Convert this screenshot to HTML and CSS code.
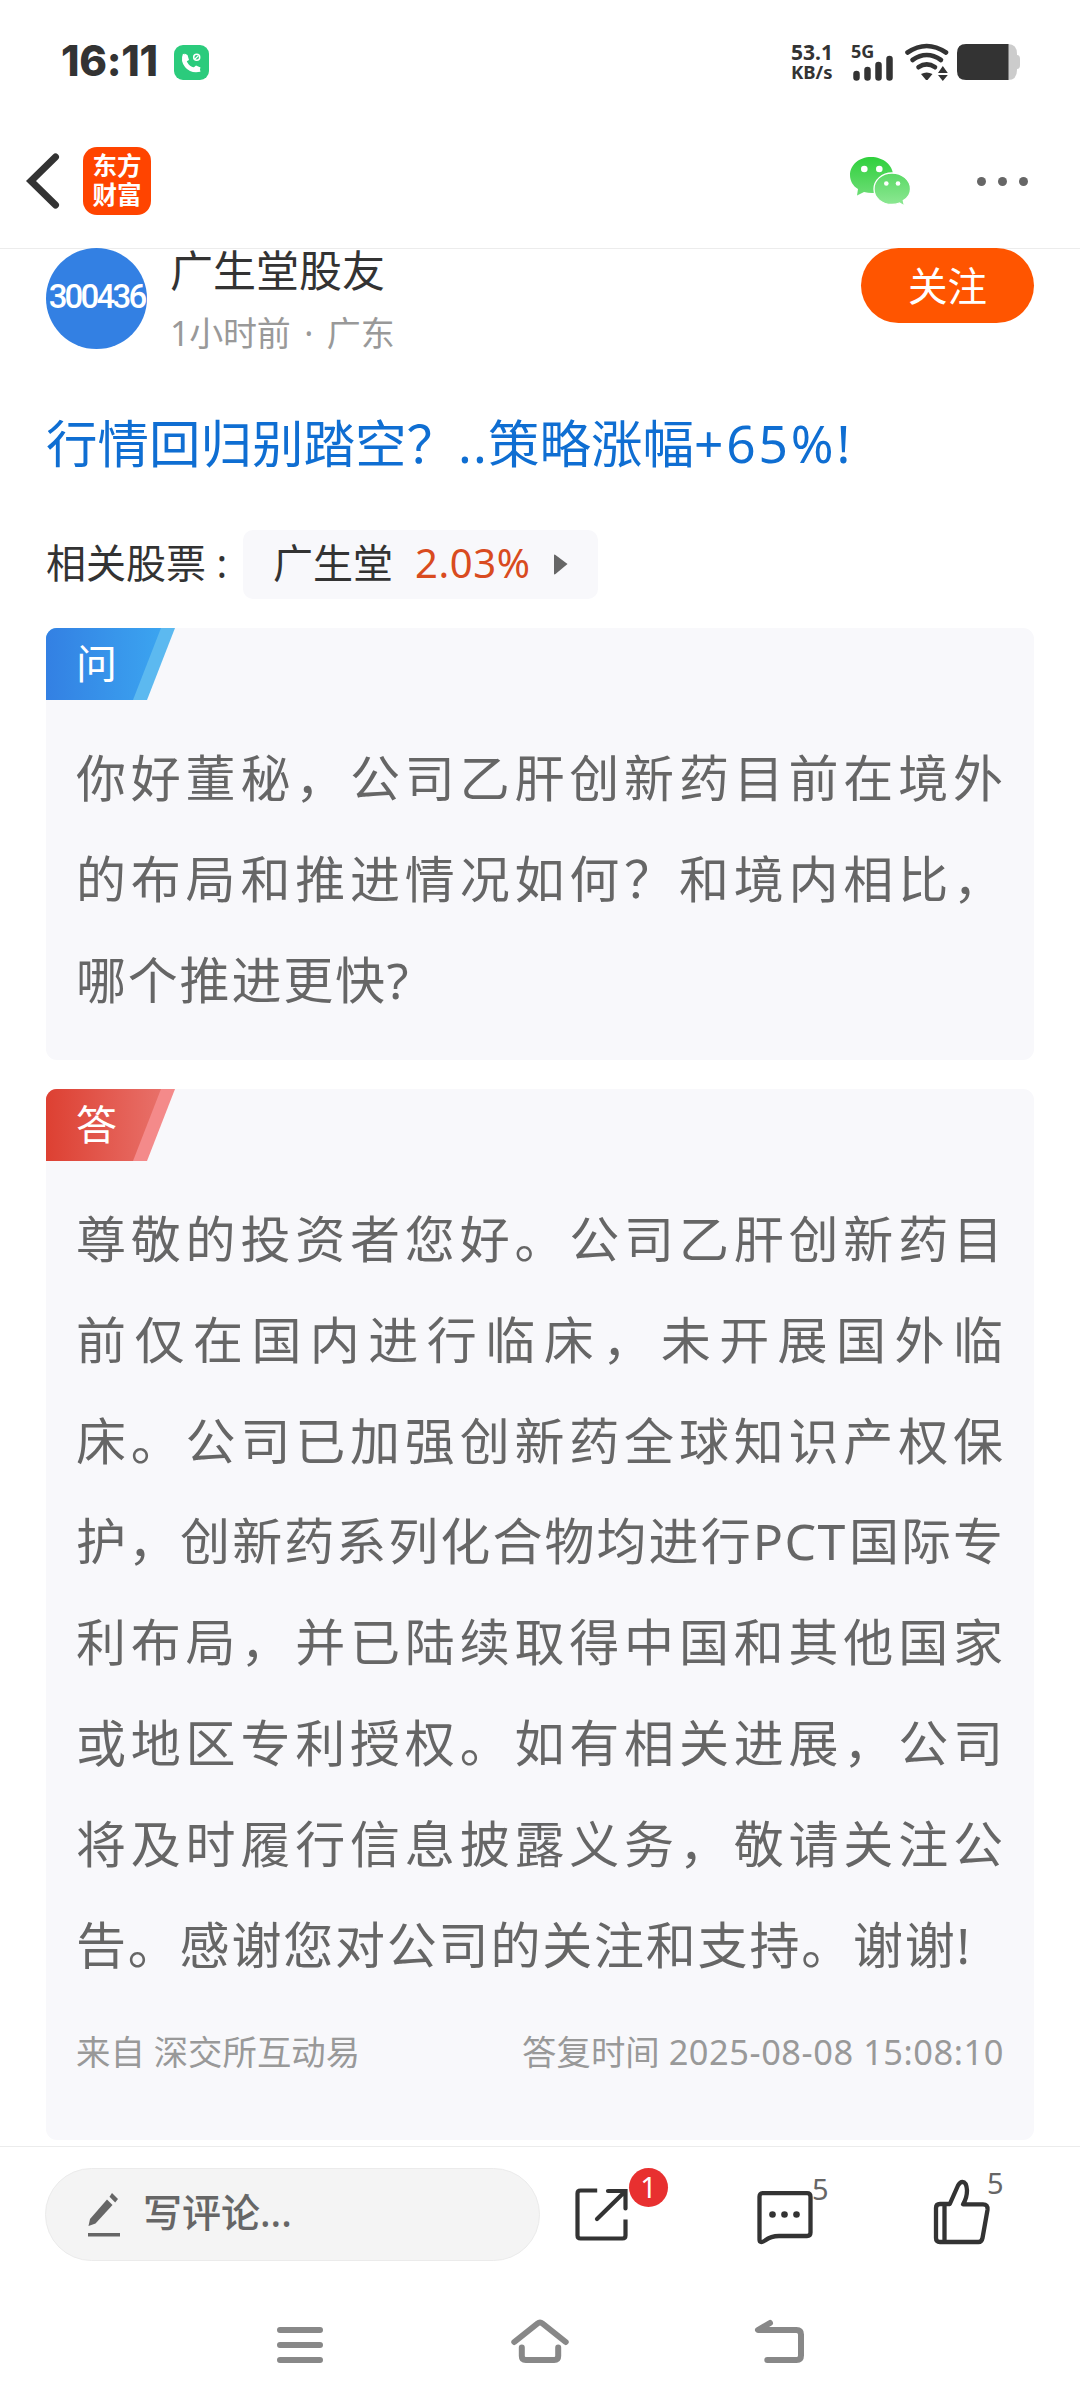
FILE: index.html
```html
<!DOCTYPE html>
<html lang="zh-CN">
<head>
  <meta charset="UTF-8">
  <meta name="viewport" content="width=device-width, initial-scale=1.0">
  <title>广生堂股友</title>
  <link rel="stylesheet" href="styles.css">
</head>
<body>
  <!-- Status bar -->
  <div class="status-bar">
    <span class="time">16:11</span>
    <svg class="call-icon" width="35" height="35" viewBox="0 0 35 35">
      <rect width="35" height="35" rx="9" fill="#2bcb7c"/>
      <path d="M11 9.5C8 17 14 27 26 24.5" fill="none" stroke="#fff" stroke-width="4.4"/>
      <path d="M10.5 8.5l3 1.5 1.5 5-3.5 2zM19 23l3-2.5 4.500 2-1 3.500z" fill="#fff"/>
      <circle cx="22.700" cy="12.300" r="3" fill="none" stroke="#fff" stroke-width="1.500"/>
      <path d="M21 14l3.400-3.400" stroke="#fff" stroke-width="1.200"/>
    </svg>
    <div class="net-speed">
      <span class="speed-value">53.1</span>
      <span class="speed-unit">KB/s</span>
    </div>
    <div class="signal">
      <span class="signal-type">5G</span>
      <svg width="41" height="26" viewBox="0 0 41 26" stroke="#333" stroke-width="6.500" stroke-linecap="round">
        <path d="M3.500 19v3.500M14.500 15v7.500M25.500 10v12.500M36.500 4v18.500"/>
      </svg>
    </div>
    <svg class="wifi" width="46" height="38" viewBox="0 0 46 38">
      <g fill="none" stroke="#333" stroke-width="4.600" stroke-linecap="round">
        <path d="M3.500 9.500Q22.700-3.500 42 9.500"/>
        <path d="M8.500 17Q22.700 7 37 17"/>
        <path d="M14.500 24.200Q22.700 18.500 31 24.200"/>
      </g>
      <path d="M17 31q5.700-3 11.500 0l-5 6h-1.500zM38.800 23l5 7H34zM34 32h9.800l-5 6z" fill="#333"/>
    </svg>
    <svg class="battery" width="63" height="36" viewBox="0 0 63 36">
      <path d="M51 0q9 0 9 10v1q3 0 3 4v6q0 4-3 4v1q0 10-9 10z" fill="#ccc"/>
      <path d="M9 0h42.500v36H9q-9 0-9-9V9q0-9 9-9z" fill="#333"/>
    </svg>
  </div>

  <!-- App header -->
  <header class="header">
    <svg class="back" width="36" height="60" viewBox="0 0 36 60">
      <path d="M30.500 6L6 30l24.500 24" fill="none" stroke="#333" stroke-width="7" stroke-linecap="round"/>
    </svg>
    <div class="logo"><span>东方</span><span>财富</span></div>
    <svg class="wechat" width="62" height="50" viewBox="0 0 62 50">
      <defs>
        <linearGradient id="wx1" x1="0" y1="0" x2="0" y2="1">
          <stop offset="0" stop-color="#2fd03c"/>
          <stop offset="1" stop-color="#6cdd75"/>
        </linearGradient>
        <linearGradient id="wx2" x1="0" y1="0" x2="0" y2="1">
          <stop offset="0" stop-color="#5ad965"/>
          <stop offset="1" stop-color="#8ee894"/>
        </linearGradient>
      </defs>
      <path d="M22 1C10 1 1 9 1 19c0 6 3 11 8 14l-1 6.500 7-3.500c16 4 29-4 29-17C44 9 34 1 22 1z" fill="url(#wx1)"/>
      <path d="M43 17c-10 0-18 7-18 16s8 15.500 18 15.500c3 0 5-.5 7.500-1.500l5 3-1.200-5.500C59 42 61.500 38 61.500 33 61.500 24 53 17 43 17z" fill="url(#wx2)" stroke="#fff" stroke-width="1.300"/>
      <g fill="#fff">
        <circle cx="15.300" cy="13" r="3.300"/>
        <circle cx="30.300" cy="13" r="3.300"/>
        <circle cx="37.300" cy="27.500" r="2.300"/>
        <circle cx="49" cy="27.500" r="2.300"/>
      </g>
    </svg>
    <div class="more"><i></i><i></i><i></i></div>
  </header>

  <main class="post">
    <div class="author">
      <div class="avatar">300436</div>
      <div class="author-info">
        <div class="author-name">广生堂股友</div>
        <div class="author-meta">1小时前 · 广东</div>
      </div>
      <button class="follow">关注</button>
    </div>

    <a class="ad-link">行情回归别踏空？<span class="dots">..</span>策略涨幅<span class="gain">+65%!</span></a>

    <div class="stocks">
      <span class="stocks-label">相关股票 :</span>
      <div class="stock-chip">
        <span>广生堂</span>
        <span class="change">2.03%</span>
        <svg width="14" height="21" viewBox="0 0 14 21"><path d="M0 1.500Q0 0 1.500 1L13.500 10 1.500 20Q0 21 0 19.500z" fill="#666"/></svg>
      </div>
    </div>

    <section class="card question">
      <div class="tag"><div class="tag-inner">问</div></div>
      <div class="content">
        <p>你好董秘，公司乙肝创新药目前在境外</p>
        <p>的布局和推进情况如何？和境内相比，</p>
        <p class="last">哪个推进更快?</p>
      </div>
    </section>

    <section class="card answer">
      <div class="tag"><div class="tag-inner">答</div></div>
      <div class="content">
        <p>尊敬的投资者您好。公司乙肝创新药目</p>
        <p>前仅在国内进行临床，未开展国外临</p>
        <p>床。公司已加强创新药全球知识产权保</p>
        <p>护，创新药系列化合物均进行<span class="latin">PCT</span>国际专</p>
        <p>利布局，并已陆续取得中国和其他国家</p>
        <p>或地区专利授权。如有相关进展，公司</p>
        <p>将及时履行信息披露义务，敬请关注公</p>
        <p class="last">告。感谢您对公司的关注和支持。谢谢!</p>
      </div>
      <div class="source">
        <span>来自 深交所互动易</span>
        <span>答复时间 <span class="date">2025-08-08 15:08:10</span></span>
      </div>
    </section>
  </main>

  <!-- Comment bar -->
  <footer class="toolbar">
    <div class="comment-input">
      <svg width="34" height="46" viewBox="0 0 34 46" fill="#666">
        <path d="M20 7.500l5.500 5.500L8.500 31.500 1.500 34 3 27z"/>
        <path d="M25 1l6 6-2.800 3.500-5.700-5.700z"/>
        <path d="M1 41h32v3.500H1z"/>
      </svg>
      <span class="placeholder">写评论...</span>
    </div>
    <div class="action share">
      <svg width="60" height="60" viewBox="0 0 60 60" fill="none" stroke="#333" stroke-width="4.200">
        <path d="M25.200 6.500H8.500q-3 0-3 3v42q0 3 3 3h42q3 0 3-3V35.500"/>
        <path d="M36 7h17.500v17.500M25 35L53 7.500" stroke-linecap="round"/>
      </svg>
      <span class="badge">1</span>
    </div>
    <div class="action comments">
      <svg width="62" height="62" viewBox="0 0 62 62" fill="none" stroke="#333" stroke-width="4.300" stroke-linejoin="round">
        <path d="M10.500 7.200H55q3.500 0 3.500 3.500v35.800q0 3.500-3.500 3.500H27q-8 0-14 4.500-5.500 3.500-5.500-1V10.700q0-3.500 3-3.500z"/>
        <g fill="#333" stroke="none"><circle cx="20.500" cy="28.500" r="3.300"/><circle cx="32.500" cy="28.500" r="3.300"/><circle cx="44.500" cy="28.500" r="3.300"/></g>
      </svg>
      <span class="count">5</span>
    </div>
    <div class="action like">
      <svg width="62" height="72" viewBox="0 0 62 72" fill="none" stroke="#333" stroke-width="4.300" stroke-linejoin="round">
        <path d="M10 28h9.800L28 9.500Q30 5.800 32.500 5.800 36.500 6 37 14.500 37 22 33 28.300H53q5 0 4.500 5.500L52.500 62q-.8 4-4 4H10q-4 0-4-4V32q0-4 4-4zM14.500 28v38"/>
      </svg>
      <span class="count">5</span>
    </div>
  </footer>

  <!-- System navigation -->
  <nav class="sys-nav">
    <svg width="60" height="48" viewBox="0 0 60 48"><path d="M10 12h40M10 27h40M10 42h40"/></svg>
    <svg width="60" height="48" viewBox="0 0 60 48"><path d="M4.300 24L27.500 5.500Q30 3.500 32.500 5.500L55.700 24M11.800 29.500V38q0 4 4 4h28.400q4 0 4-4v-8.500"/></svg>
    <svg width="60" height="48" viewBox="0 0 60 48"><path d="M20 5L8 12h38.500q4.500 0 4.500 4.500v21q0 4.500-4.500 4.500H17.300"/></svg>
  </nav>
</body>
</html>
```

FILE: styles.css
```css
:root {
  --text-color: #333;
  --muted-color: #666;
  --light-color: #999;
  --card-color: #f8f8fb;
  --line-color: #ececec;
  --accent-color: #ff5500;
}

* {
  margin: 0;
  padding: 0;
  box-sizing: border-box;
}

body {
  width: 1080px;
  height: 2408px;
  display: flex;
  flex-direction: column;
  overflow: hidden;
  background-color: #fff;
  color: var(--text-color);
  font-family: 'Noto Sans', 'Noto Sans CJK SC', sans-serif;
  white-space: nowrap;
}

svg {
  display: block;
  flex-shrink: 0;
}

/* status bar */
.status-bar {
  height: 114px;
  padding: 10px 60px 0 61px;
  display: flex;
  align-items: center;
}

.time {
  width: 113px;
  font-family: Inter, sans-serif;
  font-size: 42px;
  font-weight: 800;
  letter-spacing: -0.3px;
  line-height: 50px;
  padding-bottom: 2px;
}

.net-speed {
  margin-left: auto;
  width: 60px;
  display: flex;
  flex-direction: column;
  font-weight: 700;
}

.speed-value {
  font-size: 21px;
  line-height: 20px;
}

.speed-unit {
  font-size: 18.5px;
  line-height: 20px;
}

.signal {
  width: 53px;
  height: 38px;
  position: relative;
  display: flex;
  align-items: flex-end;
  padding-left: 2px;
}

.signal-type {
  position: absolute;
  left: 0;
  top: 0;
  font-size: 18px;
  line-height: 16px;
  font-weight: 700;
}

.battery {
  margin-left: 7px;
}

/* header */
.header {
  height: 135px;
  padding: 0 52px 0 25px;
  display: flex;
  align-items: center;
  border-bottom: 1px solid var(--line-color);
}

.logo {
  width: 68px;
  height: 68px;
  margin-left: 22px;
  border-radius: 14px;
  background-color: #ff4400;
  color: #fff;
  display: flex;
  flex-direction: column;
  align-items: center;
  justify-content: center;
  font-size: 24.5px;
  font-weight: 700;
  line-height: 29px;
  padding-bottom: 2px;
}

.wechat {
  margin-left: auto;
}

.more {
  margin-left: 66px;
  display: flex;
  gap: 12px;
}

.more i {
  width: 9px;
  height: 9px;
  border-radius: 50%;
  background-color: var(--muted-color);
}

/* post */
.post {
  height: 1897px;
  padding: 0 46px;
}

.author {
  height: 101px;
  margin-top: -1px;
  display: flex;
}

.avatar {
  width: 101px;
  height: 101px;
  border-radius: 50%;
  background-color: #3380e3;
  color: #fff;
  font-family: Roboto, sans-serif;
  font-size: 33px;
  font-weight: 500;
  letter-spacing: -2.8px;
  line-height: 98px;
  text-align: center;
}

.author-info {
  margin-left: 23px;
}

.author-name {
  font-size: 43px;
  line-height: 46px;
}

.author-meta {
  margin-top: 19px;
  font-size: 34px;
  line-height: 40px;
  word-spacing: 5px;
  letter-spacing: -0.2px;
  color: var(--light-color);
}

.follow {
  margin-left: auto;
  width: 173px;
  height: 75px;
  border: none;
  border-radius: 38px;
  background-color: var(--accent-color);
  color: #fff;
  font-family: inherit;
  font-size: 39.5px;
  line-height: 76px;
}

.ad-link {
  display: block;
  margin-top: 54px;
  margin-bottom: 47px;
  font-size: 51.5px;
  line-height: 80px;
  color: #0f6ed2;
}

.dots {
  letter-spacing: 1.2px;
}

.gain {
  letter-spacing: 2.8px;
}

.stocks {
  display: flex;
  align-items: center;
  font-size: 40px;
  line-height: 66px;
}

.stocks-label {
  width: 197px;
  padding-bottom: 3px;
}

.stock-chip {
  width: 355px;
  height: 69px;
  padding-left: 30px;
  border-radius: 10px;
  background-color: var(--card-color);
  display: flex;
  align-items: center;
}

.stock-chip span {
  padding-bottom: 3px;
}

.change {
  width: 139px;
  margin-left: 22px;
  color: #d94b20;
  letter-spacing: 0.6px;
}

.card {
  margin-top: 29px;
  border-radius: 11px;
  background-color: var(--card-color);
  overflow: hidden;
}

.question {
  height: 432px;
}

.answer {
  height: 1051px;
}

.tag {
  width: 129px;
  height: 72px;
  clip-path: polygon(0 0, 100% 0, 101px 100%, 0 100%);
}

.tag-inner {
  height: 72px;
  padding-left: 30px;
  clip-path: polygon(0 0, 115px 0, 87px 100%, 0 100%);
  color: #fff;
  font-size: 41px;
  line-height: 70px;
}

.question .tag {
  background-color: #5cb9f0;
}

.question .tag-inner {
  background: linear-gradient(90deg, #3380e3, #3ba4f0 115px);
}

.answer .tag {
  background-color: #f48a8a;
}

.answer .tag-inner {
  background: linear-gradient(90deg, #dd4032, #e87069 115px);
}

.content {
  padding: 28px 31px 0 30px;
  color: var(--muted-color);
  font-size: 50px;
  line-height: 100.8px;
}

.content p {
  text-align: justify;
  text-align-last: justify;
  text-spacing-trim: space-all;
}

.content .last {
  text-align-last: left;
  letter-spacing: 1.8px;
}

.latin {
  letter-spacing: 1.5px;
}

.source {
  padding: 30px 30px 0 30px;
  display: flex;
  justify-content: space-between;
  font-size: 34.4px;
  line-height: 54px;
  color: var(--light-color);
}

.date {
  letter-spacing: 0.55px;
}

/* toolbar */
.toolbar {
  height: 136px;
  padding: 21px 0 0 45px;
  border-top: 1px solid var(--line-color);
  display: flex;
}

.comment-input {
  width: 495px;
  height: 93px;
  padding-left: 41px;
  border: 1px solid #ebebeb;
  border-radius: 47px;
  background-color: #f4f4f4;
  display: flex;
  align-items: center;
  gap: 22px;
  font-size: 39px;
  font-weight: 500;
  color: var(--muted-color);
}

.placeholder {
  line-height: 60px;
  padding-bottom: 5px;
}

.action {
  position: relative;
}

.share {
  margin: 16px 0 0 32px;
}

.comments {
  margin: 18px 0 0 120px;
}

.like {
  margin: 8px 0 0 116px;
}

.badge {
  position: absolute;
  left: 57px;
  top: -16px;
  width: 39px;
  height: 39px;
  border-radius: 50%;
  background-color: #e83030;
  color: #fff;
  font-size: 29px;
  line-height: 37px;
  text-align: center;
}

.count {
  position: absolute;
  left: 60px;
  top: -17px;
  font-size: 29px;
  line-height: 40px;
  color: var(--muted-color);
}

.like .count {
  left: 57px;
  top: -13px;
}

/* system nav */
.sys-nav {
  padding: 36px 270px 0;
  display: flex;
  justify-content: space-between;
}

.sys-nav svg {
  fill: none;
  stroke: #888;
  stroke-width: 6;
  stroke-linecap: round;
  stroke-linejoin: round;
}
```
